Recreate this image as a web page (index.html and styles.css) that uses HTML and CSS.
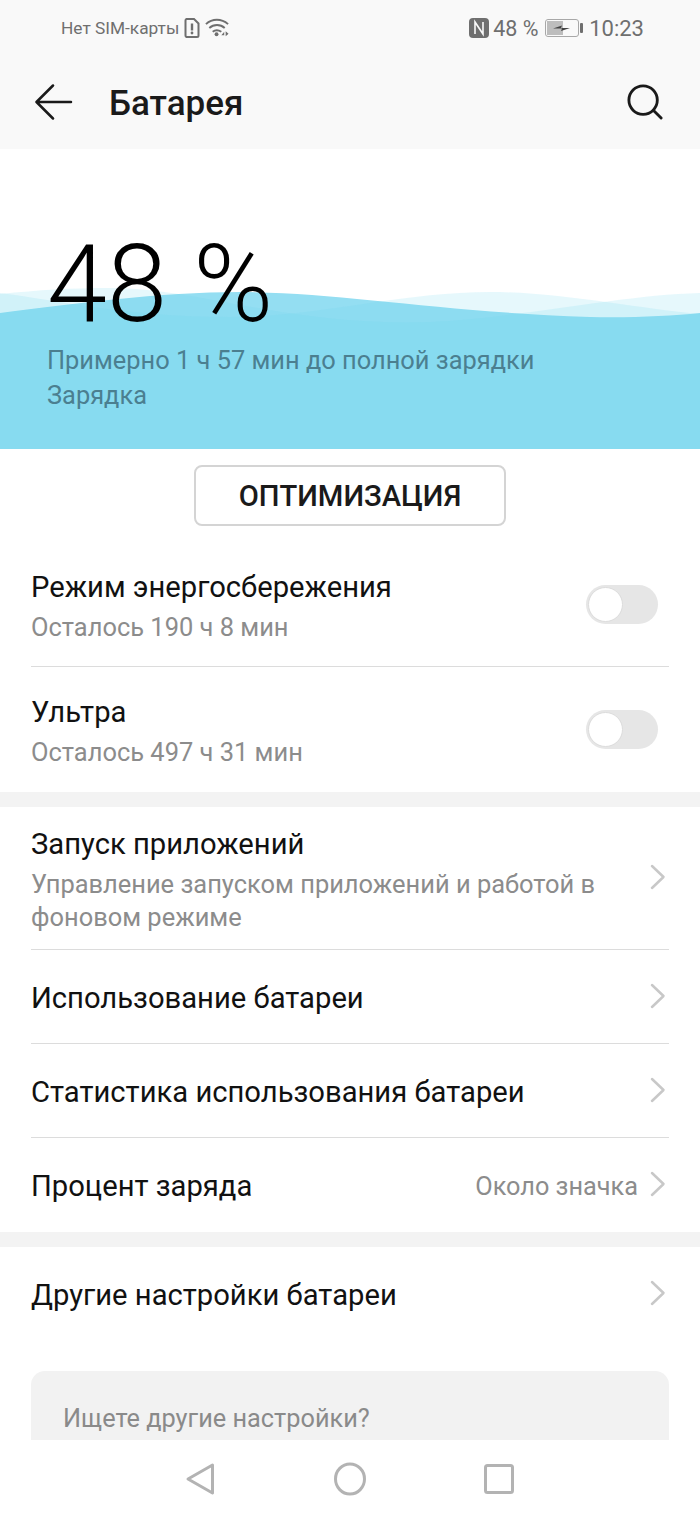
FILE: index.html
```html
<!DOCTYPE html>
<html lang="ru">
<head>
<meta charset="utf-8">
<title>Батарея</title>
<link rel="stylesheet" href="styles.css">
</head>
<body>
<div class="screen">
  <header class="top">
    <div class="status">
      <div class="status-left">
        <span class="sim-text">Нет SIM-карты</span>
        <svg class="ic-sim" viewBox="0 0 16 20"><path d="M2.500 1h7.500l4.500 4.500v12a1.500 1.500 0 0 1-1.500 1.500h-10.500a1.500 1.500 0 0 1-1-1.500v-15a1.500 1.500 0 0 1 1-1.500z" fill="none" stroke="#6f6f6f" stroke-width="2"/><path d="M8 5.500v7" stroke="#6f6f6f" stroke-width="2.400"/><circle cx="8" cy="15" r="1.400" fill="#6f6f6f"/></svg>
        <svg class="ic-wifi" viewBox="0 0 26 20"><g fill="none" stroke="#6f6f6f" stroke-width="2"><path d="M1 7c6.500-6 16-6 23 0"/><path d="M4.500 11c4.500-4 11.500-4 16 0"/><path d="M8 15c2.500-2 6-2 9 0"/></g><circle cx="12" cy="17.500" r="2" fill="#6f6f6f"/><path d="M17 18.500l3-3.500v3.500zM21.500 14.500l3 2.500-3 2.500z" fill="#6f6f6f"/></svg>
      </div>
      <div class="status-right">
        <svg class="ic-nfc" viewBox="0 0 20 20"><rect width="20" height="20" rx="4" fill="#6f6f6f"/><path d="M6 16v-12l8 12v-12" fill="none" stroke="#f9f9f9" stroke-width="1.600"/></svg>
        <span class="pct">48 %</span>
        <svg class="ic-batt" viewBox="0 0 38 18"><rect x=".5" y=".5" width="33" height="17" rx="2.500" fill="none" stroke="#a8a8a8"/><rect x="2" y="2" width="16" height="14" fill="#bdbdbd"/><rect x="35" y="4" width="3" height="10" rx="1" fill="#6f6f6f"/><path d="M8 9.500l9-3-1 2.500h9l-9 3 1-2.500z" fill="#444"/></svg>
        <span class="clock">10:23</span>
      </div>
    </div>
    <div class="appbar">
      <svg class="ic-back" viewBox="0 0 38 36"><path d="M36 18H2M18 1.500L1.500 18 18 34.500" fill="none" stroke="#1a1a1a" stroke-width="2.500" stroke-linecap="round" stroke-linejoin="round"/></svg>
      <h1 class="title">Батарея</h1>
      <svg class="ic-search" viewBox="0 0 38 38"><circle cx="17" cy="17" r="15" fill="none" stroke="#1a1a1a" stroke-width="3"/><path d="M28 28l8 8" stroke="#1a1a1a" stroke-width="3" stroke-linecap="round"/></svg>
    </div>
  </header>

  <main class="content">
    <section class="hero">
      <svg class="waves" viewBox="0 0 700 300" preserveAspectRatio="none">
        <path class="wave-main" d="M0 164C70 155 160 143 240 143C340 143 440 163 590 168C630 169 670 167 700 164V300H0Z"/>
        <path class="wave-soft" d="M0 145C40 141 70 139 110 139C200 139 290 178 430 173C520 169 620 146 700 144V300H0Z"/>
        <path class="wave-soft" d="M0 144C40 148 120 168 230 168C320 168 400 143 490 143C560 143 640 160 700 165V300H0Z"/>
      </svg>
      <div class="hero-text">
        <div class="big">48 %</div>
        <p class="hero-line">Примерно 1 ч 57 мин до полной зарядки</p>
        <p class="hero-line">Зарядка</p>
      </div>
    </section>

    <div class="btn-wrap"><button class="btn">ОПТИМИЗАЦИЯ</button></div>

    <section class="group group-first">
      <div class="row row-sw row-a">
        <div class="row-text"><div class="row-title">Режим энергосбережения</div><div class="row-sub">Осталось 190 ч 8 мин</div></div>
        <span class="switch"><span class="knob"></span></span>
      </div>
      <div class="row row-sw row-b">
        <div class="row-text"><div class="row-title">Ультра</div><div class="row-sub">Осталось 497 ч 31 мин</div></div>
        <span class="switch"><span class="knob"></span></span>
      </div>
    </section>

    <div class="gap"></div>

    <section class="group">
      <div class="row row-tall">
        <div class="row-text"><div class="row-title">Запуск приложений</div><div class="row-sub">Управление запуском приложений и работой в фоновом режиме</div></div>
        <svg class="chev" viewBox="0 0 16 26"><path d="M2 2l11.500 11L2 24" fill="none" stroke="#c8c8c8" stroke-width="2.500" stroke-linecap="round" stroke-linejoin="round"/></svg>
      </div>
      <div class="row row-one">
        <div class="row-title">Использование батареи</div>
        <svg class="chev" viewBox="0 0 16 26"><path d="M2 2l11.500 11L2 24" fill="none" stroke="#c8c8c8" stroke-width="2.500" stroke-linecap="round" stroke-linejoin="round"/></svg>
      </div>
      <div class="row row-one">
        <div class="row-title">Статистика использования батареи</div>
        <svg class="chev" viewBox="0 0 16 26"><path d="M2 2l11.500 11L2 24" fill="none" stroke="#c8c8c8" stroke-width="2.500" stroke-linecap="round" stroke-linejoin="round"/></svg>
      </div>
      <div class="row row-one">
        <div class="row-title">Процент заряда</div>
        <span class="row-val">Около значка</span>
        <svg class="chev" viewBox="0 0 16 26"><path d="M2 2l11.500 11L2 24" fill="none" stroke="#c8c8c8" stroke-width="2.500" stroke-linecap="round" stroke-linejoin="round"/></svg>
      </div>
    </section>

    <div class="gap"></div>

    <section class="group">
      <div class="row row-one">
        <div class="row-title">Другие настройки батареи</div>
        <svg class="chev" viewBox="0 0 16 26"><path d="M2 2l11.500 11L2 24" fill="none" stroke="#c8c8c8" stroke-width="2.500" stroke-linecap="round" stroke-linejoin="round"/></svg>
      </div>
    </section>

    <section class="card"><div class="card-text">Ищете другие настройки?</div></section>
  </main>

  <nav class="nav">
    <svg class="nav-back" viewBox="0 0 30 34"><path d="M27.500 3L3 17l24.500 14z" fill="none" stroke="#b3b3b3" stroke-width="3" stroke-linejoin="round"/></svg>
    <svg class="nav-home" viewBox="0 0 32 34"><ellipse cx="16" cy="17" rx="14.500" ry="15" fill="none" stroke="#b3b3b3" stroke-width="3"/></svg>
    <svg class="nav-recent" viewBox="0 0 30 30"><rect x="1.500" y="1.500" width="27" height="27" rx="2" fill="none" stroke="#b3b3b3" stroke-width="3"/></svg>
  </nav>
</div>
</body>
</html>
```
FILE: styles.css
```css
* { box-sizing: border-box; }
html, body { margin: 0; padding: 0; }
body { background: #fff; font-family: Roboto, "Noto Sans", sans-serif; color: #000; }
.screen { width: 700px; height: 1517px; display: flex; flex-direction: column; overflow: hidden; }

.top { background: #f9f9f9; height: 149px; flex: none; }
.status { height: 56px; padding: 16px 56px 0 61px; display: flex; justify-content: space-between; align-items: flex-start; color: #6f6f6f; }
.status-left, .status-right { display: flex; align-items: center; height: 24px; }
.sim-text { font-size: 17.300px; width: 123px; white-space: nowrap; }
.ic-sim { width: 16px; height: 20px; margin-right: 5px; }
.ic-wifi { width: 25px; height: 20px; margin-top: -2px; }
.ic-nfc { width: 20px; height: 20px; margin-right: 4px; }
.pct { font-size: 21.500px; width: 52px; white-space: nowrap; }
.ic-batt { width: 38px; height: 18px; margin-right: 6px; }
.clock { font-size: 22px; white-space: nowrap; }

.appbar { height: 93px; padding: 0 35px 0 35px; display: flex; align-items: center; }
.ic-back { width: 38px; height: 36px; margin-top: -1px; }
.title { margin: 3px 0 0 36px; flex: 1; font-size: 35px; font-weight: 500; color: #1a1a1a; line-height: 40px; }
.ic-search { width: 36px; height: 36px; margin: -1px 2px 0 0; }

.content { flex: 1; min-height: 0; overflow: hidden; }

.hero { position: relative; height: 300px; overflow: hidden; background: #fff; }
.waves { position: absolute; left: 0; top: 0; width: 700px; height: 300px; }
.wave-main { fill: #94def2; }
.wave-soft { fill: rgba(108, 211, 236, .17); }
.hero-text { position: relative; padding: 81px 0 0 47px; }
.big { font-size: 108px; font-weight: 300; line-height: 108px; height: 113px; color: #000; white-space: nowrap; }
.hero-line { margin: 0; font-size: 25.400px; line-height: 35px; color: #4b7f90; white-space: nowrap; }

.btn-wrap { display: flex; justify-content: center; padding-top: 16px; height: 93px; }
.btn { width: 312px; height: 61px; border: 2px solid #d4d4d4; border-radius: 8px; background: #fff; font: 500 29.200px Roboto, sans-serif; color: #1a1a1a; padding: 0; }

.group { padding: 0 31px; }
.row { display: flex; align-items: center; border-bottom: 1px solid #dcdcdc; }
.group > .row:last-child { border-bottom: 0; }
.row-text { flex: 1; min-width: 0; margin-top: 4px; }
.row-title { flex: 1; font-size: 29.200px; line-height: 36px; color: #111; white-space: nowrap; }
.row-one > .row-title { margin-top: 2px; }
.row-sub { font-size: 25.450px; line-height: 33px; color: #8c8c8c; margin-top: 6px; }
.row-val { font-size: 25.300px; color: #8c8c8c; margin: 2px 12px 0 0; white-space: nowrap; }
.row-sw { height: 125px; padding-right: 11px; }
.row-a .row-text { margin-top: 5px; }
.row-tall { height: 143px; }
.row-tall .row-sub { width: 580px; margin-top: 6px; }
.row-one { height: 94px; }
.chev { width: 16px; height: 26px; flex: none; margin-right: 3px; margin-bottom: 2px; }

.switch { width: 72px; height: 39px; border-radius: 20px; background: #e6e6e6; padding: 2px; flex: none; }
.knob { display: block; width: 35px; height: 35px; border-radius: 50%; background: #fff; border: 1px solid #dcdcdc; }

.gap { height: 15px; background: #f3f3f3; }

.card { margin: 30px 31px 0; height: 200px; background: #f2f2f2; border-radius: 14px; padding: 32px 32px 0; }
.card-text { font-size: 25.300px; line-height: 32px; color: #8a8a8a; }

.nav { flex: none; height: 77px; background: #fff; position: relative; display: flex; align-items: center; padding: 0 0 0 185px; }
.nav-back { width: 30px; height: 34px; }
.nav-home { width: 32px; height: 34px; margin-left: 119px; }
.nav-recent { width: 30px; height: 30px; margin-left: 118px; }
```
